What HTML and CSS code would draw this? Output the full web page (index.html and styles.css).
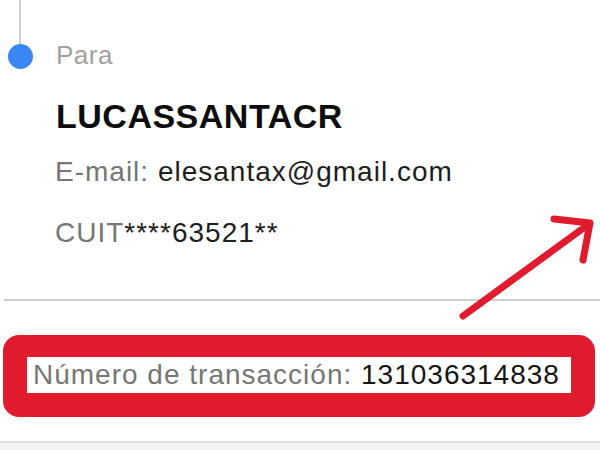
FILE: index.html
```html
<!DOCTYPE html>
<html lang="es">
<head>
<meta charset="utf-8">
<title>Comprobante</title>
<link rel="stylesheet" href="styles.css">
</head>
<body>
<div class="page">
  <section class="step">
    <div class="rail">
      <div class="rail-line"></div>
      <div class="rail-dot"></div>
    </div>
    <div class="step-body">
      <div class="label">Para</div>
      <div class="name">LUCASSANTACR</div>
      <div class="detail"><span class="muted">E-mail:</span> elesantax@gmail.com</div>
      <div class="detail cuit"><span class="muted">CUIT</span>****63521**</div>
    </div>
  </section>
  <div class="divider"></div>
  <div class="highlight">
    <div class="txn"><span class="muted">Número de transacción:</span> 131036314838</div>
  </div>
  <div class="footer"></div>
  <svg class="arrow" width="600" height="450" viewBox="0 0 600 450" aria-hidden="true">
    <g fill="none" stroke="#e11b2e" stroke-width="7" stroke-linecap="round" stroke-linejoin="round">
      <path d="M463 316 L589 224"/>
      <path d="M554 219 L590 223 L583 260"/>
    </g>
  </svg>
</div>
</body>
</html>
```
FILE: styles.css
```css
html, body {
  margin: 0;
  padding: 0;
  background: #ffffff;
}
.page {
  position: relative;
  width: 600px;
  height: 450px;
  overflow: hidden;
  font-family: "Liberation Sans", Arial, sans-serif;
  color: #1a1a1a;
}
.step {
  display: flex;
  gap: 16px;
}
.rail {
  width: 40px;
  display: flex;
  flex-direction: column;
  align-items: center;
}
.rail-line {
  width: 2px;
  height: 45px;
  background: #cfcfcf;
}
.rail-dot {
  width: 25px;
  height: 25px;
  border-radius: 50%;
  background: #3a86f4;
  margin-top: -1px;
}
.step-body {
  padding-top: 41px;
}
.label {
  font-size: 26px;
  line-height: 28px;
  letter-spacing: 0.5px;
  color: #a0a0a0;
}
.name {
  margin-top: 27px;
  font-size: 34px;
  line-height: 40px;
  font-weight: bold;
  letter-spacing: 0.5px;
  color: #0d0d0d;
}
.detail {
  margin-top: 20px;
  font-size: 28px;
  line-height: 32px;
  letter-spacing: 1px;
  color: #1e1e1e;
  margin-left: -1px;
}
.detail.cuit {
  margin-top: 29px;
}
.muted {
  color: #767676;
}
.divider {
  margin: 50px 0 0 4px;
  height: 2px;
  background: #cdcdcd;
}
.highlight {
  margin: 34px 5px 0 3px;
  border: 24px solid #e11b2e;
  border-top-width: 22px;
  border-radius: 16px;
  background: #ffffff;
}
.txn {
  height: 36px;
  line-height: 36px;
  padding-left: 6px;
  font-size: 28px;
  letter-spacing: 1px;
  color: #151515;
}
.footer {
  margin-top: 24px;
  height: 20px;
  border-top: 2px solid #dcdcdc;
  background: #f3f3f3;
}
.arrow {
  position: absolute;
  left: 0;
  top: 0;
  pointer-events: none;
}
```
